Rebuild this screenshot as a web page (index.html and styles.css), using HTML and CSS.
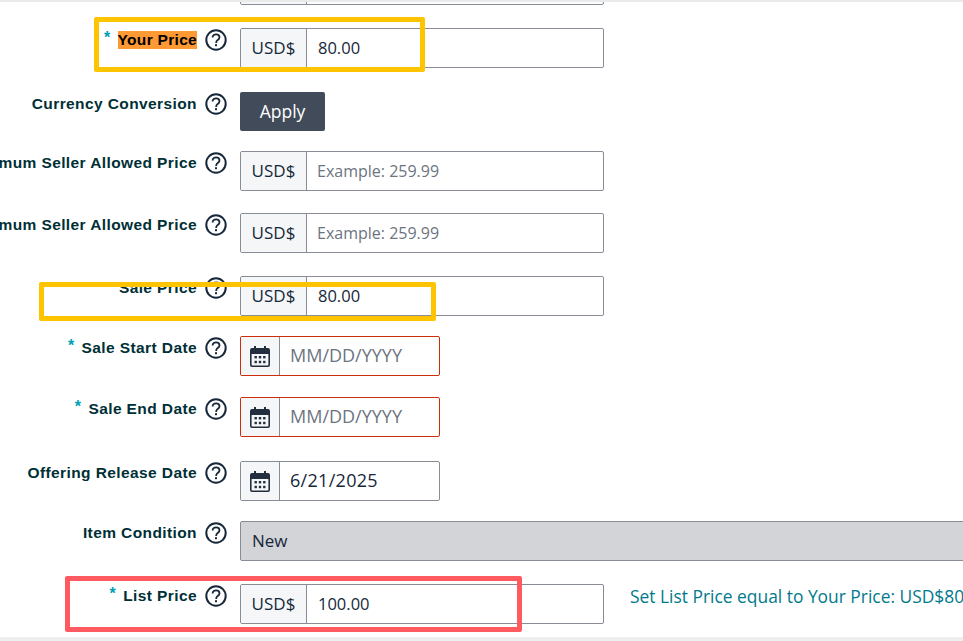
FILE: index.html
```html
<!DOCTYPE html>
<html lang="en">
<head>
<meta charset="utf-8">
<title>Offer pricing</title>
<link rel="stylesheet" href="styles.css">
</head>
<body>
<svg class="defs" width="0" height="0" aria-hidden="true">
  <symbol id="help" viewBox="0 0 22 22">
    <circle cx="11" cy="11" r="9.7" fill="none" stroke="#16283a" stroke-width="2"/>
    <path d="M7.6 8.6c0-2 1.5-3.3 3.5-3.3s3.4 1.2 3.4 3c0 1.4-.8 2.1-1.8 2.8-1 .7-1.5 1.2-1.5 2.3v.5" fill="none" stroke="#16283a" stroke-width="1.8"/>
    <rect x="10" y="15.2" width="2" height="2" fill="#16283a"/>
  </symbol>
  <symbol id="cal" viewBox="0 0 20 21">
    <path d="M4 0h2v2h8V0h2v2h2a2 2 0 0 1 2 2v15a2 2 0 0 1-2 2H2a2 2 0 0 1-2-2V4a2 2 0 0 1 2-2h2z" fill="#232f3e"/>
    <rect x="1.600" y="8" width="16.800" height="11.400" rx=".6" fill="#f5f6f7"/>
    <g fill="#232f3e">
      <rect x="4.500" y="10" width="2.400" height="2.400"/><rect x="8.800" y="10" width="2.400" height="2.400"/><rect x="13.100" y="10" width="2.400" height="2.400"/>
      <rect x="4.500" y="14.800" width="2.400" height="2.400"/><rect x="8.800" y="14.800" width="2.400" height="2.400"/><rect x="13.100" y="14.800" width="2.400" height="2.400"/>
    </g>
  </symbol>
</svg>

<div class="topline"></div>

<main class="viewport">
  <form class="form">
    <div class="row">
      <div class="label"></div>
      <div class="help-slot"></div>
      <div class="field price"><span class="addon usd"></span><span class="value"></span></div>
    </div>

    <div class="row gap-23">
      <div class="label"><span class="req">*</span><span class="mark">Your Price</span></div>
      <svg class="help"><use href="#help"/></svg>
      <div class="field price"><span class="addon usd">USD$</span><span class="value">80.00</span></div>
    </div>

    <div class="row gap-24">
      <div class="label">Currency Conversion</div>
      <svg class="help"><use href="#help"/></svg>
      <button class="apply" type="button">Apply</button>
    </div>

    <div class="row gap-20">
      <div class="label">Minimum Seller Allowed Price</div>
      <svg class="help"><use href="#help"/></svg>
      <div class="field price"><span class="addon usd">USD$</span><span class="value hint">Example: 259.99</span></div>
    </div>

    <div class="row gap-22">
      <div class="label">Maximum Seller Allowed Price</div>
      <svg class="help"><use href="#help"/></svg>
      <div class="field price"><span class="addon usd">USD$</span><span class="value hint">Example: 259.99</span></div>
    </div>

    <div class="row gap-23">
      <div class="label">Sale Price</div>
      <svg class="help"><use href="#help"/></svg>
      <div class="field price"><span class="addon usd">USD$</span><span class="value">80.00</span></div>
    </div>

    <div class="row gap-20">
      <div class="label"><span class="req">*</span>Sale Start Date</div>
      <svg class="help"><use href="#help"/></svg>
      <div class="field date error"><span class="addon day"><svg class="cal"><use href="#cal"/></svg></span><span class="value date-hint">MM/DD/YYYY</span></div>
    </div>

    <div class="row gap-21">
      <div class="label"><span class="req">*</span>Sale End Date</div>
      <svg class="help"><use href="#help"/></svg>
      <div class="field date error"><span class="addon day"><svg class="cal"><use href="#cal"/></svg></span><span class="value date-hint">MM/DD/YYYY</span></div>
    </div>

    <div class="row gap-24">
      <div class="label">Offering Release Date</div>
      <svg class="help"><use href="#help"/></svg>
      <div class="field date"><span class="addon day"><svg class="cal"><use href="#cal"/></svg></span><span class="value date-value">6/21/2025</span></div>
    </div>

    <div class="row gap-20">
      <div class="label">Item Condition</div>
      <svg class="help"><use href="#help"/></svg>
      <div class="field condition"><span class="value">New</span></div>
    </div>

    <div class="row gap-23">
      <div class="label"><span class="req">*</span>List Price</div>
      <svg class="help"><use href="#help"/></svg>
      <div class="field price"><span class="addon usd">USD$</span><span class="value">100.00</span></div>
      <a class="set-link" href="#">Set List Price equal to Your Price: USD$80.00</a>
    </div>
  </form>
</main>

<div class="band"></div>

<div class="note note-your"></div>
<div class="note note-sale"></div>
<div class="note note-list"></div>
</body>
</html>
```

FILE: styles.css
```css
* { box-sizing: border-box; }

html, body {
  margin: 0;
  height: 100%;
  overflow: hidden;
  background: #fff;
}

body {
  position: relative;
  display: flex;
  flex-direction: column;
  font-family: "Open Sans", "Noto Sans", sans-serif;
  color: #0f2b3a;
}

.defs { position: absolute; }

.topline {
  position: absolute;
  top: 0;
  left: 0;
  right: 0;
  height: 2px;
  background: #e9eaec;
}

.viewport {
  flex: 1;
  min-height: 0;
  overflow: hidden;
}

.band {
  height: 4px;
  background: #eceef0;
}

.form {
  margin-top: -35px;
  display: flex;
  flex-direction: column;
  width: 963px;
}

.row {
  display: flex;
  align-items: flex-start;
}

.gap-20 { margin-top: 20px; }
.gap-21 { margin-top: 21px; }
.gap-22 { margin-top: 22px; }
.gap-23 { margin-top: 23px; }
.gap-24 { margin-top: 24px; }

.label {
  flex: 0 0 197px;
  width: 197px;
  min-width: 0;
  display: flex;
  justify-content: flex-end;
  align-items: baseline;
  white-space: nowrap;
  margin-top: 3px;
  height: 18px;
  line-height: 18px;
  font-family: "Liberation Sans", Arial, sans-serif;
  font-size: 15.500px;
  font-weight: 700;
  letter-spacing: .4px;
  color: #002f36;
}

.req {
  margin-right: 7px;
  color: #00a0b4;
  font-size: 16px;
  position: relative;
  top: -2px;
}

.mark {
  background: #ff9933;
  color: #000;
  letter-spacing: .3px;
}

.help {
  flex: none;
  width: 22px;
  height: 22px;
  margin: 1px 13px 0 8px;
}

.help-slot {
  flex: none;
  width: 43px;
}

.field {
  flex: none;
  height: 40px;
  display: flex;
  align-items: stretch;
  border: 1px solid #888c94;
  border-radius: 2px;
  font-size: 16.500px;
  line-height: 38px;
  overflow: hidden;
  background: #fff;
  color: #16283a;
}

.price { width: 364px; }
.date { width: 200px; }

.condition {
  flex: 1;
  margin-right: -30px;
  background: #d2d4d8;
  font-size: 17px;
}

.error { border-color: #cc2d0a; }

.addon {
  flex: none;
  display: flex;
  align-items: center;
  justify-content: center;
  background: #f5f6f7;
  border-right: 1px solid #888c94;
}

.usd { width: 66px; font-size: 17px; }
.day { width: 39px; }

.cal {
  width: 20px;
  height: 21px;
}

.value {
  padding-left: 11px;
  white-space: nowrap;
}

.condition .value { padding-left: 11px; }

.hint {
  color: #6c7480;
  font-size: 16px;
  padding-left: 10px;
}

.date-hint {
  color: #6c7480;
  font-size: 18px;
  line-height: 37px;
  padding-left: 10px;
}

.date-value {
  font-size: 18px;
  line-height: 37px;
  letter-spacing: .3px;
  padding-left: 10px;
}

.apply {
  flex: none;
  width: 85px;
  height: 39px;
  padding: 0 0 2px;
  border: 0;
  border-radius: 2px;
  background: #414b5a;
  color: #fff;
  font-family: inherit;
  font-size: 17.500px;
}

.set-link {
  flex: none;
  margin: 0 0 0 26px;
  line-height: 24px;
  white-space: nowrap;
  font-size: 17.400px;
  color: #007a8c;
  text-decoration: none;
}

.note {
  position: absolute;
  border: 5px solid #ffc400;
  border-radius: 2px;
}

.note-your { left: 94px; top: 17px; width: 331px; height: 55px; }
.note-sale { left: 39px; top: 282px; width: 397px; height: 39px; }
.note-list { left: 65px; top: 576px; width: 457px; height: 56px; border-color: #ff5a5f; }
```
